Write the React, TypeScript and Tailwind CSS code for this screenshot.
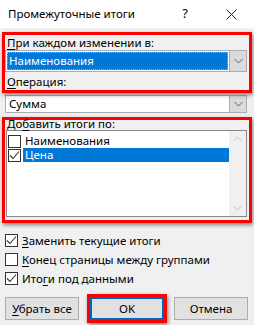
import React from "react";

const font = { fontFamily: '"Noto Sans", "Segoe UI", sans-serif' };

const Ul = ({ children }: { children: React.ReactNode }) => <span className="underline underline-offset-2">{children}</span>;

const Chevron = ({ up = false, color = "#5f5f5f" }: { up?: boolean; color?: string }) => (
  <svg width="9" height="6" viewBox="0 0 9 6" className={up ? "rotate-180" : ""}>
    <path d="M0.5 1 L4.5 5 L8.5 1" fill="none" stroke={color} strokeWidth="1" />
  </svg>
);

const Check = () => (
  <svg width="11" height="11" viewBox="0 0 11 11">
    <path d="M1 5.5 L4 8.5 L10 1.5" fill="none" stroke="#333" strokeWidth="1.1" />
  </svg>
);

const CheckBox = ({ checked }: { checked: boolean }) => (
  <div className="w-[13px] h-[13px] border border-[#333333] bg-white flex items-center justify-center flex-shrink-0">
    {checked && <Check />}
  </div>
);

const Button = ({ children, focused = false }: { children: React.ReactNode; focused?: boolean }) => (
  <div
    className={`h-[23px] w-[74px] flex items-center justify-center text-[11.5px] text-black bg-[#e1e1e1] ${
      focused ? "border-2 border-[#0067c0]" : "border border-[#adadad]"
    }`}
  >
    {children}
  </div>
);

export default function App() {
  return (
    <div className="w-[254px] h-[325px] bg-[#f0f0f0] text-black overflow-hidden" style={font}>
      {/* title bar */}
      <div className="h-[28px] bg-white flex items-center text-[11.5px]">
        <span className="ml-[8px] flex-1">Промежуточные итоги</span>
        <span className="w-[10px] text-center mr-[36px] text-[13px]">?</span>
        <svg width="11" height="11" viewBox="0 0 11 11" className="mr-[17px]">
          <path d="M0.5 0.5 L10.5 10.5 M10.5 0.5 L0.5 10.5" stroke="#222" strokeWidth="1" />
        </svg>
      </div>

      {/* red box 1 */}
      <div className="relative z-10 mt-[4px] mx-[2px] h-[61px] border-[3px] border-[#ff0000] shadow-[1px_2px_4px_rgba(0,0,0,0.45)]">
        <div className="h-[15px] leading-[15px] text-[11.5px] pl-[2px]">
          <Ul>П</Ul>ри каждом изменении в:
        </div>
        <div className="h-[22px] w-[242px] border border-[#adadad] bg-white flex">
          <div className="m-[1px] flex-1 bg-[#0078d7] text-white text-[11.5px] leading-[18px] pl-[2px] outline outline-1 outline-dotted outline-[#e8a040] -outline-offset-1">
            Наименования
          </div>
          <div className="w-[17px] bg-[#dadada] border-l border-[#adadad] flex items-center justify-center">
            <Chevron />
          </div>
        </div>
        <div className="h-[18px] leading-[18px] text-[11.5px] pl-[2px] pt-[1px]">
          <Ul>О</Ul>перация:
        </div>
      </div>

      {/* Сумма */}
      <div className="mt-[2px] ml-[5px] w-[242px] h-[18px] border border-[#adadad] bg-white flex">
        <div className="flex-1 text-[11.5px] leading-[16px] pl-[3px]">Сумма</div>
        <div className="w-[17px] bg-[#dadada] border-l border-[#adadad] flex items-center justify-center">
          <Chevron />
        </div>
      </div>

      {/* red box 2 */}
      <div className="relative z-10 mt-[4px] mx-[2px] h-[106px] border-[3px] border-[#ff0000] shadow-[1px_2px_4px_rgba(0,0,0,0.45)]">
        <div className="h-[10px] leading-[7px] text-[11.5px] pl-[2px]">
          До<Ul>б</Ul>авить итоги по:
        </div>
        <div className="ml-[1px] w-[241px] h-[87px] border border-[#828790] bg-white flex">
          <div className="flex-1 pt-[3px] pl-[1px]">
            <div className="h-[14px] flex items-center">
              <CheckBox checked={false} />
              <span className="ml-[2px] pl-[2px] text-[11.5px] leading-[14px]">Наименования</span>
            </div>
            <div className="h-[14px] flex items-center">
              <CheckBox checked />
              <div className="ml-[2px] flex-1 h-[14px] bg-[#0078d7] text-white text-[11.5px] leading-[14px] pl-[2px]">Цена</div>
            </div>
          </div>
          <div className="w-[17px] bg-[#f0f0f0] flex flex-col items-center justify-between py-[5px]">
            <Chevron up color="#c0c0c0" />
            <Chevron color="#c0c0c0" />
          </div>
        </div>
      </div>

      {/* options */}
      <div className="mt-[8px] pl-[5px] text-[11.5px]">
        <div className="h-[19px] flex items-center gap-[4px]">
          <CheckBox checked />
          <span>
            <Ul>З</Ul>аменить текущие итоги
          </span>
        </div>
        <div className="h-[19px] flex items-center gap-[4px]">
          <CheckBox checked={false} />
          <span>
            <Ul>К</Ul>онец страницы между группами
          </span>
        </div>
        <div className="h-[19px] flex items-center gap-[4px]">
          <CheckBox checked />
          <span>
            Ито<Ul>г</Ul>и под данными
          </span>
        </div>
      </div>

      {/* buttons */}
      <div className="mt-[6px] pl-[5px] flex items-center">
        <Button>
          <span>
            <Ul>У</Ul>брать все
          </span>
        </Button>
        <div className="ml-[8px] border-[3px] border-[#ff0000] shadow-[1px_2px_4px_rgba(0,0,0,0.45)]">
          <Button focused>OK</Button>
        </div>
        <div className="ml-[7px]">
          <Button>Отмена</Button>
        </div>
      </div>
    </div>
  );
}
